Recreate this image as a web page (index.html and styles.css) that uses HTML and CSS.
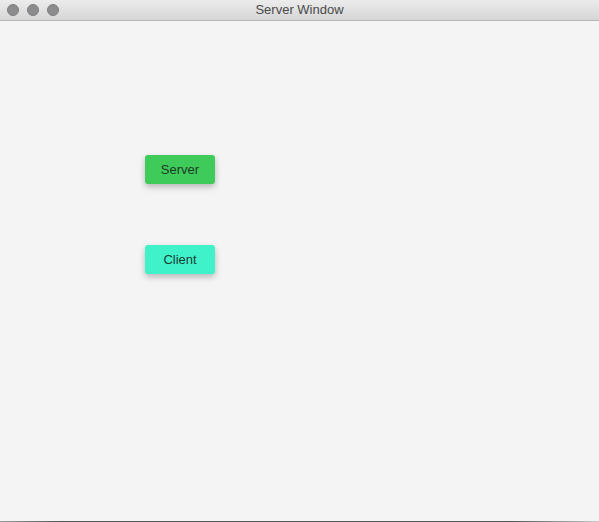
FILE: index.html
```html
<!DOCTYPE html>
<html>
<head>
<meta charset="utf-8">
<link rel="stylesheet" href="styles.css">
</head>
<body>
<div class="window">
  <div class="titlebar">
    <div class="lights">
      <span class="dot"></span><span class="dot"></span><span class="dot"></span>
    </div>
    <div class="title">Server Window</div>
  </div>
  <div class="content">
    <button class="btn btn-server">Server</button>
    <button class="btn btn-client">Client</button>
  </div>
  <div class="bottom-edge"></div>
</div>
</body>
</html>
```
FILE: styles.css
```css
html, body {
  margin: 0;
  padding: 0;
  width: 599px;
  height: 522px;
  overflow: hidden;
  background: #f4f4f4;
  font-family: "Liberation Sans", Arial, sans-serif;
}
.window {
  display: flex;
  flex-direction: column;
  width: 599px;
  height: 522px;
}
.titlebar {
  position: relative;
  height: 21px;
  flex: 0 0 21px;
  box-sizing: border-box;
  background: linear-gradient(#ececec, #d6d6d6);
  border-bottom: 1px solid #b6b6b6;
  display: flex;
  align-items: center;
  justify-content: center;
}
.lights {
  position: absolute;
  left: 7px;
  top: 4px;
  display: flex;
  gap: 8px;
}
.dot {
  width: 12px;
  height: 12px;
  border-radius: 50%;
  background: #8c8c8f;
  box-sizing: border-box;
  border: 1px solid #7d7d80;
}
.title {
  font-size: 13px;
  color: #4a4a4a;
  line-height: 20px;
}
.content {
  flex: 1;
  display: flex;
  flex-direction: column;
  align-items: flex-start;
  padding: 134px 0 0 145px;
  gap: 61px;
}
.btn {
  width: 70px;
  height: 29px;
  border: none;
  border-radius: 3px;
  font-family: "Liberation Sans", Arial, sans-serif;
  font-size: 13px;
  color: #1d3b26;
  box-shadow: 0 3px 6px rgba(0,0,0,0.25);
  padding: 0;
}
.btn-server {
  background: #3ecb5a;
}
.btn-client {
  background: #3ff2c9;
  color: #1b3d35;
}
.bottom-edge {
  height: 1px;
  flex: 0 0 1px;
  background: linear-gradient(90deg, #9a9a9a, #555 10%, #555 85%, #c8c8c8);
}
```
